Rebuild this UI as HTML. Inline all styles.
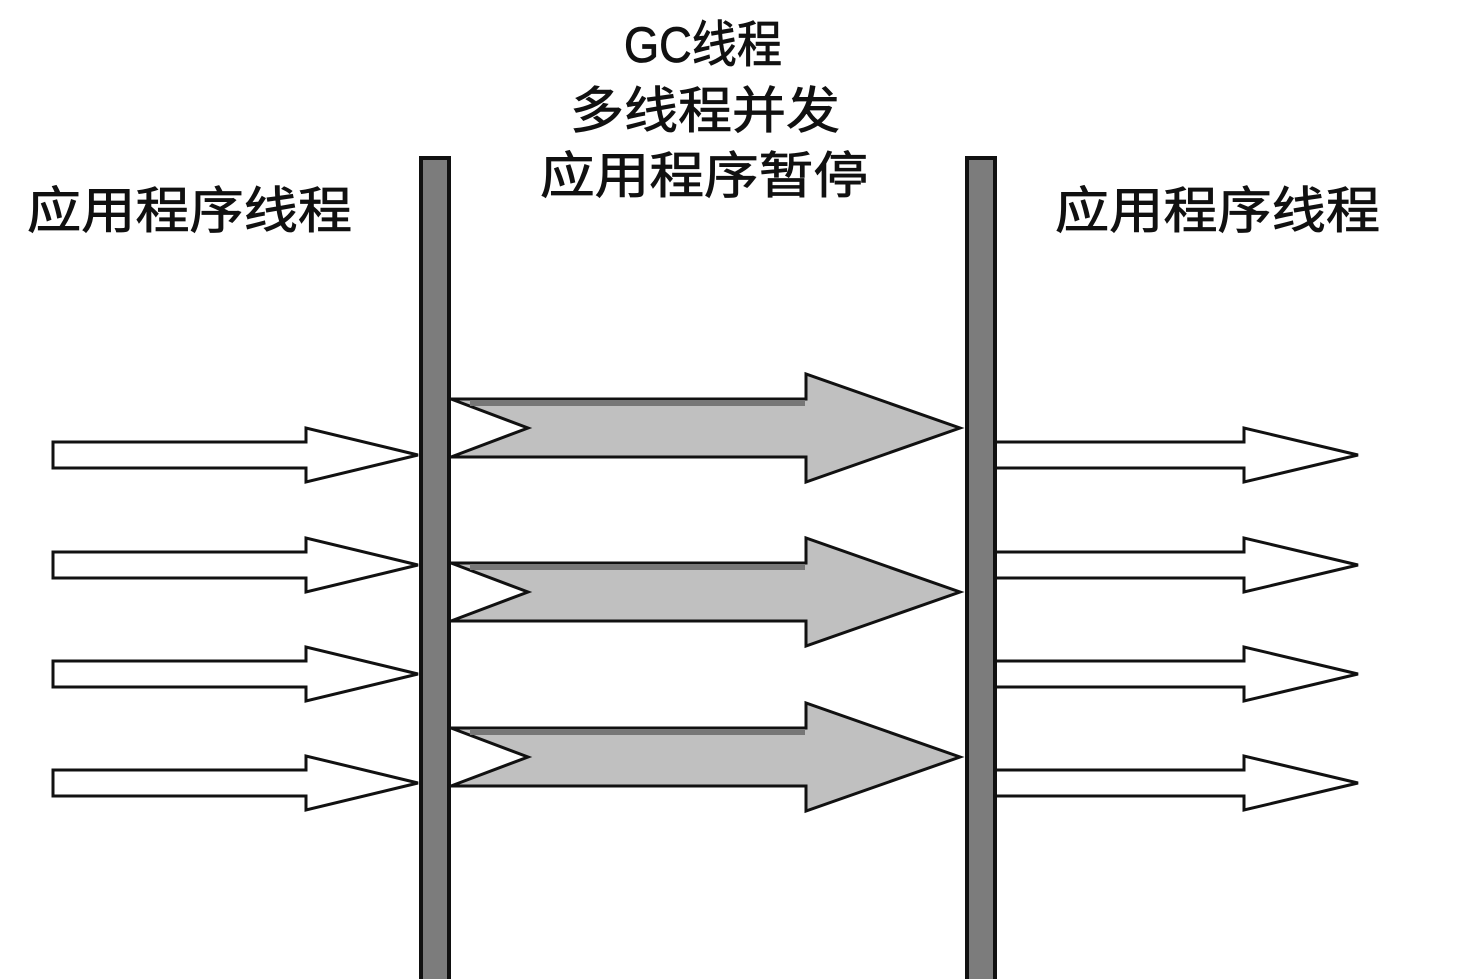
<!DOCTYPE html><html><head><meta charset="utf-8"><style>html,body{margin:0;padding:0;background:#fff;width:1466px;height:979px;overflow:hidden}</style></head><body>
<svg width="1466" height="979" viewBox="0 0 1466 979" xmlns="http://www.w3.org/2000/svg" font-family="'Liberation Sans','Noto Sans CJK SC',sans-serif">
<g fill="#111" stroke="#111" stroke-width="0.8" font-size="50">
<text x="27" y="228" textLength="325" lengthAdjust="spacingAndGlyphs">应用程序线程</text>
<text x="1055" y="228" textLength="325" lengthAdjust="spacingAndGlyphs">应用程序线程</text>
<text x="624" y="62" textLength="158" lengthAdjust="spacingAndGlyphs">GC线程</text>
<text x="570" y="128" textLength="270" lengthAdjust="spacingAndGlyphs">多线程并发</text>
<text x="540" y="193" textLength="328" lengthAdjust="spacingAndGlyphs">应用程序暂停</text>
</g>
<g fill="#c0c0c0" stroke="#111" stroke-width="3">
<path d="M451 399 L806 399 L806 374 L960 428 L806 482 L806 457 L451 457 L528 428 Z"/>
<path d="M451 563 L806 563 L806 538 L960 592 L806 646 L806 621 L451 621 L528 592 Z"/>
<path d="M451 728 L806 728 L806 703 L960 757 L806 811 L806 786 L451 786 L528 757 Z"/>
</g>
<g fill="#777">
<rect x="470" y="400" width="335" height="6"/>
<rect x="470" y="564" width="335" height="6"/>
<rect x="470" y="729" width="335" height="6"/>
</g>
<g fill="#fff" stroke="#111" stroke-width="3">
<path d="M53 442 L306 442 L306 428 L418 455 L306 482 L306 468 L53 468 Z"/>
<path d="M53 552 L306 552 L306 538 L418 565 L306 592 L306 578 L53 578 Z"/>
<path d="M53 661 L306 661 L306 647 L418 674 L306 701 L306 687 L53 687 Z"/>
<path d="M53 770 L306 770 L306 756 L418 783 L306 810 L306 796 L53 796 Z"/>
<path d="M991 442 L1244 442 L1244 428 L1358 455 L1244 482 L1244 468 L991 468 Z"/>
<path d="M991 552 L1244 552 L1244 538 L1358 565 L1244 592 L1244 578 L991 578 Z"/>
<path d="M991 661 L1244 661 L1244 647 L1358 674 L1244 701 L1244 687 L991 687 Z"/>
<path d="M991 770 L1244 770 L1244 756 L1358 783 L1244 810 L1244 796 L991 796 Z"/>
</g>
<rect x="421" y="158" width="28" height="830" fill="#7c7c7c" stroke="#111" stroke-width="4"/>
<rect x="967" y="158" width="28" height="830" fill="#7c7c7c" stroke="#111" stroke-width="4"/>
</svg>
</body></html>
